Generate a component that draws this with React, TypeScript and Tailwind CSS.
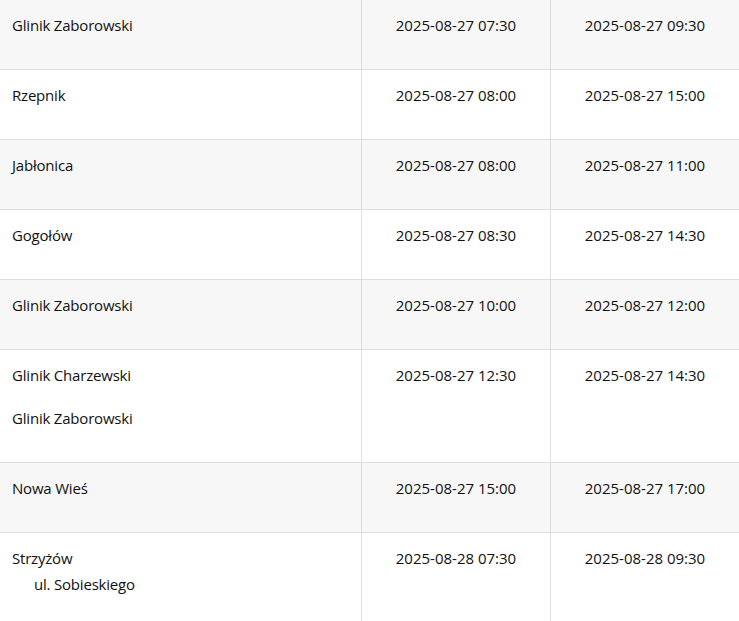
const ROWS: { places: string[]; from: string; to: string; sub?: string }[] = [
  { places: ["Glinik Zaborowski"], from: "2025-08-27 07:30", to: "2025-08-27 09:30" },
  { places: ["Rzepnik"], from: "2025-08-27 08:00", to: "2025-08-27 15:00" },
  { places: ["Jabłonica"], from: "2025-08-27 08:00", to: "2025-08-27 11:00" },
  { places: ["Gogołów"], from: "2025-08-27 08:30", to: "2025-08-27 14:30" },
  { places: ["Glinik Zaborowski"], from: "2025-08-27 10:00", to: "2025-08-27 12:00" },
  { places: ["Glinik Charzewski", "Glinik Zaborowski"], from: "2025-08-27 12:30", to: "2025-08-27 14:30" },
  { places: ["Nowa Wieś"], from: "2025-08-27 15:00", to: "2025-08-27 17:00" },
  { places: ["Strzyżów"], sub: "ul. Sobieskiego", from: "2025-08-28 07:30", to: "2025-08-28 09:30" },
];

export default function App() {
  return (
    <div
      className="w-[739px] h-[621px] overflow-hidden bg-white text-[15px] text-[#111]"
      style={{ fontFamily: '"Open Sans", "Noto Sans", sans-serif' }}
    >
      {ROWS.map((r, i) => (
        <div
          key={i}
          className={`grid grid-cols-[362px_189px_188px] border-b border-[#dedede] ${
            i % 2 === 0 ? "bg-[#f7f7f7]" : "bg-white"
          }`}
        >
          <div className="pl-3 pt-[13px] pb-[32px] border-r border-[#dedede] leading-6 tracking-[-0.2px]">
            {r.places.map((p, j) => (
              <p key={j} className={j < r.places.length - 1 ? "mb-[19px]" : ""}>
                {p}
              </p>
            ))}
            {r.sub && <p className="pl-[22px] mt-[2px]">{r.sub}</p>}
          </div>
          <div className="pt-[13px] pb-[32px] border-r border-[#dedede] leading-6 text-center">
            {r.from}
          </div>
          <div className="pt-[13px] pb-[32px] leading-6 text-center">{r.to}</div>
        </div>
      ))}
    </div>
  );
}
